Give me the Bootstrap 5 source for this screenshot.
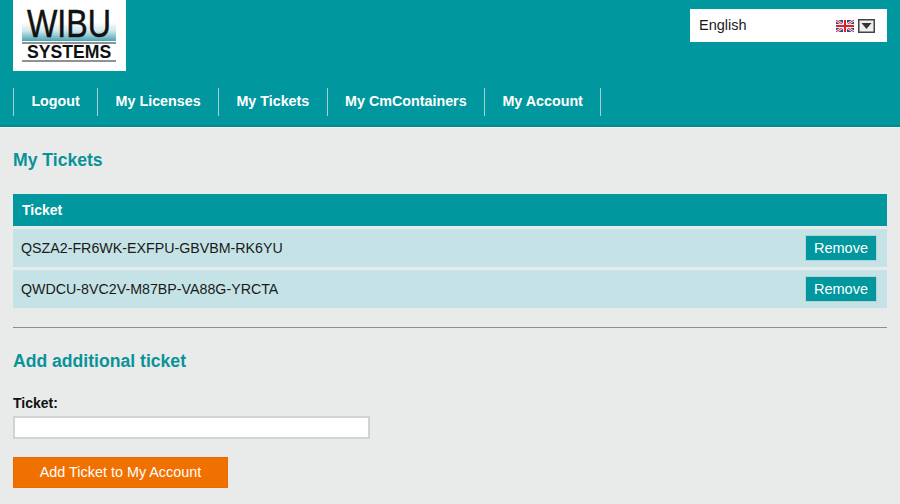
<!DOCTYPE html>
<html lang="en">
<head>
<meta charset="utf-8">
<title>My Tickets</title>
<link href="https://cdn.jsdelivr.net/npm/bootstrap@5.3.0/dist/css/bootstrap.min.css" rel="stylesheet">
<style>
html, body { height: 100%; }
body { background: #e8ebea; font-family: "Liberation Sans", Arial, sans-serif; color: #1a1a1a; overflow: hidden; }
.top-band { background: #00979e; height: 127px; border-bottom: 2px solid #058a91; padding: 0 13px; box-shadow: 0 1px 0 #f2f4f4; }
.logo-box { background: #fff; width: 113px; height: 71px; display: block; }
.lang-box { background: #fff; width: 197px; height: 33px; margin-top: 9px; padding: 0 12px 0 9px; font-size: 14.5px; }
.menu-row { margin-top: 17px; height: 28px; border-right: 1px solid #a9cfd1; width: max-content; }
.menu-row a { color: #fff; font-weight: 700; font-size: 14.3px; text-decoration: none; border-left: 1px solid #a9cfd1; padding: 0 17.4px; line-height: 27px; display: block; }
.page-title { color: #0a9299; font-weight: 700; font-size: 17.6px; margin: 0; line-height: 20px; }
.main-area { padding: 23px 13px 0; }
.tick-table { border-collapse: separate; border-spacing: 0 3px; margin: 21px 0 0; width: 100%; --bs-table-bg: transparent; }
.tick-table th { background: #00979e; color: #fff; font-size: 14px; font-weight: 700; height: 32px; padding: 0 9px; border: 0; vertical-align: middle; }
.tick-table td { background: #c5e3e6; color: #1a1a1a; font-size: 14.24px; height: 38px; padding: 0 11px 0 8px; border: 0; vertical-align: middle; }
.tick-table td:first-child { padding-top: 2px; }
.rm-btn { background: #00979e; color: #fff; border: 0; border-radius: 0; font-size: 14.5px; width: 70px; height: 24px; padding: 0; line-height: 24px; display: block; margin-left: auto; box-shadow: 0 0 0 1px #b5d3d5; }
.rule-line { border: 0; border-top: 1px solid #8c8f8f; opacity: 1; margin: 16px 0 23px; }
.field-label { font-weight: 700; font-size: 14px; color: #111; margin: 23px 0 4px; line-height: 18px; display: block; }
.field-input { display: block; width: 357px; height: 23px; background: #fff; border: 2px solid #d0d3d3; border-radius: 0; padding: 0 4px; }
.add-btn { background: #f07000; color: #fff; border: 1px solid #ea6a00; border-radius: 0; font-size: 14.4px; width: 215px; height: 31px; padding: 0; margin-top: 18px; display: block; }
</style>
</head>
<body>
<header class="top-band">
  <div class="d-flex justify-content-between align-items-start">
    <a class="logo-box" href="#" aria-label="WIBU Systems">
      <svg width="113" height="71" viewBox="0 0 113 71">
        <defs><linearGradient id="fade" x1="0" y1="0" x2="0" y2="1"><stop offset="0" stop-color="#fff"/><stop offset=".45" stop-color="#d4e8ec"/><stop offset="1" stop-color="#4aa5b4"/></linearGradient></defs>
        <rect x="9" y="22" width="94" height="19" fill="url(#fade)"/>
        <text transform="translate(14 37) scale(.825 1)" font-family="Liberation Sans" font-size="39" fill="#111" stroke="#111" stroke-width=".5">WIBU</text>
        <rect x="9" y="42" width="94" height="2" fill="#8f9294"/>
        <text transform="translate(14 58) scale(.98 1)" font-family="Liberation Sans" font-weight="700" font-size="18" fill="#111">SYSTEMS</text>
        <rect x="9" y="60" width="94" height="2" fill="#8f9294"/>
      </svg>
    </a>
    <div class="lang-box d-flex align-items-center justify-content-between">
      <span>English</span>
      <span class="d-flex align-items-center gap-1">
        <svg width="18" height="12" viewBox="0 0 18 12">
          <rect width="18" height="12" fill="#2f4a8f"/>
          <path d="M0 0L18 12M18 0L0 12" stroke="#f4eeee" stroke-width="2.6"/>
          <path d="M0 0L18 12M18 0L0 12" stroke="#d8232a" stroke-width="1"/>
          <path d="M9 0V12M0 6H18" stroke="#f4eeee" stroke-width="4"/>
          <path d="M9 0V12M0 6H18" stroke="#d8232a" stroke-width="2"/>
        </svg>
        <svg width="17" height="14" viewBox="0 0 17 14">
          <rect x=".75" y=".75" width="15.5" height="12.5" fill="#eee" stroke="#444" stroke-width="1.5"/>
          <path d="M3.5 4H13.5L8.5 10Z" fill="#333"/>
        </svg>
      </span>
    </div>
  </div>
  <nav class="menu-row d-flex">
    <a href="#">Logout</a>
    <a href="#">My Licenses</a>
    <a href="#">My Tickets</a>
    <a href="#">My CmContainers</a>
    <a href="#">My Account</a>
  </nav>
</header>
<main class="main-area">
  <h1 class="page-title">My Tickets</h1>
  <table class="table tick-table">
    <thead><tr><th colspan="2">Ticket</th></tr></thead>
    <tbody>
      <tr><td>QSZA2-FR6WK-EXFPU-GBVBM-RK6YU</td><td><button class="btn rm-btn" type="button">Remove</button></td></tr>
      <tr><td>QWDCU-8VC2V-M87BP-VA88G-YRCTA</td><td><button class="btn rm-btn" type="button">Remove</button></td></tr>
    </tbody>
  </table>
  <hr class="rule-line">
  <h2 class="page-title">Add additional ticket</h2>
  <form>
    <label class="field-label" for="tk">Ticket:</label>
    <input class="field-input" id="tk" type="text">
    <button class="btn add-btn" type="button">Add Ticket to My Account</button>
  </form>
</main>
<script src="https://cdn.jsdelivr.net/npm/bootstrap@5.3.0/dist/js/bootstrap.bundle.min.js"></script>
</body>
</html>
